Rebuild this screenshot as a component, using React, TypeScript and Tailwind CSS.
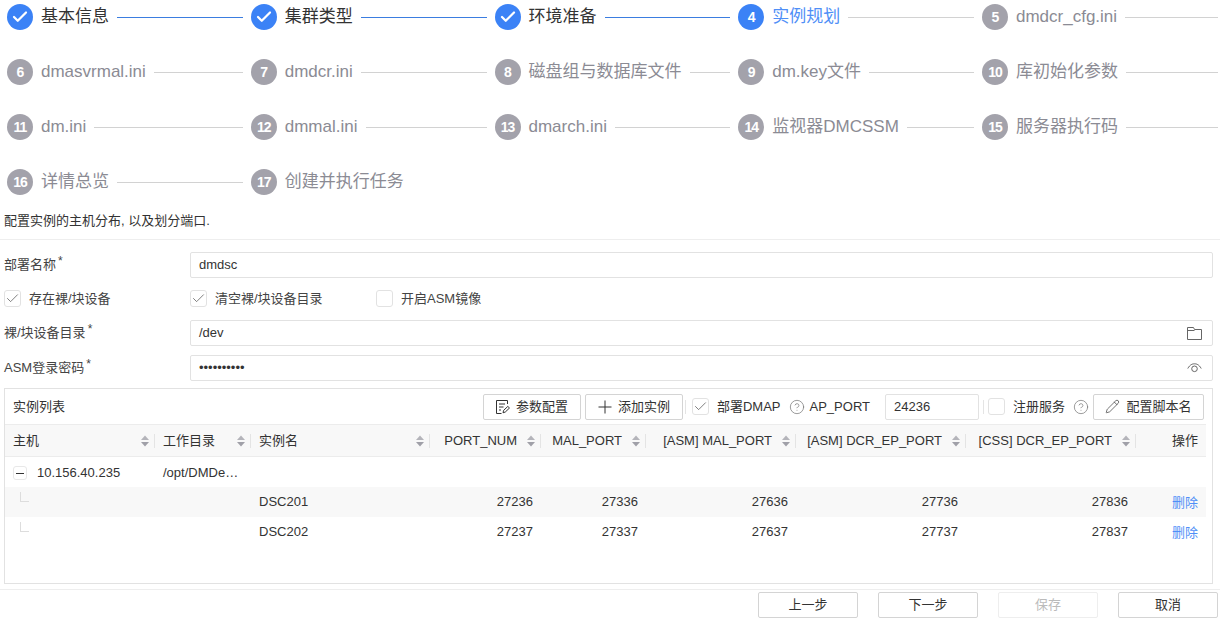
import React from 'react';
import { Check, Pencil, CircleHelp } from 'lucide-react';

type StepState = 'done' | 'active' | 'todo';

const STEPS: { label: string; state: StepState }[] = [
  { label: '基本信息', state: 'done' },
  { label: '集群类型', state: 'done' },
  { label: '环境准备', state: 'done' },
  { label: '实例规划', state: 'active' },
  { label: 'dmdcr_cfg.ini', state: 'todo' },
  { label: 'dmasvrmal.ini', state: 'todo' },
  { label: 'dmdcr.ini', state: 'todo' },
  { label: '磁盘组与数据库文件', state: 'todo' },
  { label: 'dm.key文件', state: 'todo' },
  { label: '库初始化参数', state: 'todo' },
  { label: 'dm.ini', state: 'todo' },
  { label: 'dmmal.ini', state: 'todo' },
  { label: 'dmarch.ini', state: 'todo' },
  { label: '监视器DMCSSM', state: 'todo' },
  { label: '服务器执行码', state: 'todo' },
  { label: '详情总览', state: 'todo' },
  { label: '创建并执行任务', state: 'todo' },
];

const ROWS = [
  { name: 'DSC201', port: 27236, mal: 27336, asmMal: 27636, asmDcr: 27736, cssDcr: 27836, striped: true },
  { name: 'DSC202', port: 27237, mal: 27337, asmMal: 27637, asmDcr: 27737, cssDcr: 27837, striped: false },
];

function Step({ index, label, state }: { index: number; label: string; state: StepState }) {
  const isLast = index === STEPS.length;
  return (
    <div className="flex h-[26px] items-center pr-2">
      <div
        className={`flex h-[26px] w-[26px] shrink-0 items-center justify-center rounded-full text-[14px] font-bold tracking-[-1px] text-white ${
          state === 'todo' ? 'bg-[#a3a2ab]' : 'bg-[#3b82f6]'
        }`}
      >
        {state === 'done' ? <Check size={18} strokeWidth={3} /> : index}
      </div>
      <span
        className={`ml-2 whitespace-nowrap text-[17px] ${
          state === 'done' ? 'text-[#333333]' : state === 'active' ? 'text-[#4f8ff7]' : 'text-[#8b8b94]'
        }`}
      >
        {label}
      </span>
      {!isLast && (
        <div className={`ml-2 h-px flex-1 ${state === 'done' ? 'bg-[#3b7de0]' : 'bg-[#d2d2d2]'}`} />
      )}
    </div>
  );
}

function Box({ checked }: { checked?: boolean }) {
  return (
    <span className="flex h-[17px] w-[17px] shrink-0 items-center justify-center rounded-[3px] border border-[#e2e2e2] bg-white text-[#555555]">
      {checked && <Check size={15} strokeWidth={1.2} />}
    </span>
  );
}

function Label({ text }: { text: string }) {
  return (
    <div className="w-[186px] shrink-0 whitespace-nowrap text-[13px] text-[#444444]">
      {text}
      <span className="relative -top-1 ml-0.5 text-[12px]">*</span>
    </div>
  );
}

function ToolButton({ icon, text, className }: { icon: React.ReactNode; text: string; className: string }) {
  return (
    <button className={`flex h-[26px] items-center justify-center gap-1.5 rounded-[2px] border border-[#d4d4d4] bg-white text-[13px] text-[#333333] ${className}`}>
      {icon}
      {text}
    </button>
  );
}

function Sort() {
  return (
    <svg width="10" height="14" viewBox="0 0 10 14" className="shrink-0">
      <path d="M5 1.5 9 6H1z" fill="#b4b4ba" />
      <path d="M5 12.5 1 8h8z" fill="#a0a0a8" />
    </svg>
  );
}

function FolderIcon() {
  return (
    <svg width="15" height="13" viewBox="0 0 15 13" fill="none" stroke="#666666" strokeWidth="1">
      <path d="M.5.5h6l1 2h7v10H.5z" />
      <path d="M.5 3.5h7" />
    </svg>
  );
}

function EyeIcon() {
  return (
    <svg width="15" height="10" viewBox="0 0 15 10" fill="none" stroke="#666666" strokeWidth="1">
      <path d="M.8 5.5C3 1.5 5.5.8 7.5.8s4.5.7 6.7 4.7" />
      <circle cx="7.5" cy="5.8" r="2.8" />
    </svg>
  );
}

function ConfigIcon() {
  return (
    <svg width="14" height="14" viewBox="0 0 14 14" fill="none" stroke="#333333" strokeWidth="1">
      <path d="M11.5 4V.5H.5v13h5" />
      <path d="M3 4h6M3 7h4.5M3 10h2" />
      <path d="M7 12.8l.6-2.4 4.2-4 1.7 1.6-4.2 4z" />
    </svg>
  );
}

function PlusIcon() {
  return (
    <svg width="14" height="14" viewBox="0 0 14 14" fill="none" stroke="#333333" strokeWidth="1">
      <path d="M7 .5v13M.5 7h13" />
    </svg>
  );
}

function HeadCell({ text, right, className }: { text: string; right?: boolean; className: string }) {
  return (
    <div className={`flex h-full items-center ${className}`}>
      <div className="flex h-full flex-1 items-center pl-2 pr-1">
        <span className={`flex-1 whitespace-nowrap ${right ? 'pr-[9px] text-right' : ''}`}>{text}</span>
        <Sort />
      </div>
      <div className="h-[14px] w-px bg-[#e4e4e4]" />
    </div>
  );
}

function FootButton({ text, disabled }: { text: string; disabled?: boolean }) {
  return (
    <button
      className={`h-[26px] w-[100px] rounded-[2px] border text-[13px] ${
        disabled ? 'border-[#eeeeee] text-[#bbbbbb]' : 'border-[#d4d4d4] text-[#333333]'
      }`}
    >
      {text}
    </button>
  );
}

export default function App() {
  return (
    <div className="flex h-[622px] w-[1220px] flex-col overflow-hidden bg-white font-['Liberation_Sans','Noto_Sans_CJK_SC',sans-serif] text-[13px] text-[#333333]">
      <div className="grid w-[1227px] shrink-0 grid-cols-[repeat(5,243.75px)] gap-y-[29px] pl-[7px] pt-1">
        {STEPS.map((step, i) => (
          <Step key={step.label} index={i + 1} label={step.label} state={step.state} />
        ))}
      </div>

      <p className="mt-[18px] pl-1 text-[13px] leading-4 text-[#333333]">配置实例的主机分布, 以及划分端口.</p>
      <div className="mt-[10px] h-px shrink-0 bg-[#eeeeee]" />

      {/* form */}
      <div className="mt-3 pl-1 pr-[7px]">
        <div className="flex h-[26px] items-center">
          <Label text="部署名称" />
          <div className="flex h-full flex-1 items-center rounded-[2px] border border-[#e2e2e2] px-2">dmdsc</div>
        </div>
        <div className="mt-3 flex h-[17px] items-center text-[#444444]">
          <div className="flex w-[186px] items-center gap-2">
            <Box checked />
            存在裸/块设备
          </div>
          <div className="flex w-[186px] items-center gap-2">
            <Box checked />
            清空裸/块设备目录
          </div>
          <div className="flex items-center gap-2">
            <Box />
            开启ASM镜像
          </div>
        </div>
        <div className="mt-[13px] flex h-[26px] items-center">
          <Label text="裸/块设备目录" />
          <div className="flex h-full flex-1 items-center justify-between rounded-[2px] border border-[#e2e2e2] pl-2 pr-[10px]">
            /dev
            <FolderIcon />
          </div>
        </div>
        <div className="mt-[9px] flex h-[26px] items-center">
          <Label text="ASM登录密码" />
          <div className="flex h-full flex-1 items-center justify-between rounded-[2px] border border-[#e2e2e2] pl-2 pr-[10px]">
            <span>••••••••••</span>
            <EyeIcon />
          </div>
        </div>
      </div>

      {/* instance table */}
      <div className="ml-1 mr-[7px] mt-[7px] h-[196px] shrink-0 border border-[#e2e2e2]">
        <div className="flex h-[35px] items-center px-2">
          <span className="flex-1">实例列表</span>
          <ToolButton icon={<ConfigIcon />} text="参数配置" className="w-[98px]" />
          <ToolButton icon={<PlusIcon />} text="添加实例" className="ml-1 w-[98px]" />
          <div className="ml-[2px] mr-[6px] h-[14px] w-px bg-[#e4e4e4]" />
          <Box checked />
          <span className="ml-2 whitespace-nowrap">部署DMAP</span>
          <CircleHelp size={16} strokeWidth={1.1} className="ml-2 text-[#777777]" />
          <span className="ml-[5px] whitespace-nowrap">AP_PORT</span>
          <div className="ml-[15px] flex h-[26px] w-[94px] items-center rounded-[2px] border border-[#e2e2e2] px-2">24236</div>
          <div className="mx-1 h-[14px] w-px bg-[#e4e4e4]" />
          <Box />
          <span className="ml-2 whitespace-nowrap">注册服务</span>
          <CircleHelp size={16} strokeWidth={1.1} className="ml-2 text-[#777777]" />
          <ToolButton icon={<Pencil size={15} strokeWidth={1.1} />} text="配置脚本名" className="ml-1 w-[111px] gap-1" />
        </div>

        <div className="mr-[6px] flex h-[33px] items-center border-y border-[#ececec] bg-[#f8f8f8]">
          <HeadCell text="主机" className="w-[150px]" />
          <HeadCell text="工作目录" className="w-[96px]" />
          <HeadCell text="实例名" className="w-[179px]" />
          <HeadCell text="PORT_NUM" right className="w-[111px]" />
          <HeadCell text="MAL_PORT" right className="w-[105px]" />
          <HeadCell text="[ASM] MAL_PORT" right className="w-[150px]" />
          <HeadCell text="[ASM] DCR_EP_PORT" right className="w-[170px]" />
          <HeadCell text="[CSS] DCR_EP_PORT" right className="w-[170px]" />
          <div className="w-[70px] pr-2 text-right">操作</div>
        </div>

        <div className="mr-[6px] flex h-[30px] items-center pt-[2px]">
          <div className="flex w-[150px] items-center pl-2">
            <span className="flex h-[14px] w-[14px] items-center justify-center rounded-[3px] border border-[#e8e8e8]">
              <span className="h-px w-2 bg-[#333333]" />
            </span>
            <span className="ml-[10px]">10.156.40.235</span>
          </div>
          <div className="w-[96px] truncate px-2">/opt/DMDe…</div>
        </div>

        {ROWS.map((row) => (
          <div key={row.name} className={`mr-[6px] flex h-[30px] items-center ${row.striped ? 'bg-[#f8f8f8]' : ''}`}>
            <div className="h-full w-[246px] pl-[15px] pt-[5px]">
              <div className="h-[10px] w-[9px] border-b border-l border-[#dddddd]" />
            </div>
            <div className="w-[179px] pl-2">{row.name}</div>
            <div className="w-[111px] pr-2 text-right">{row.port}</div>
            <div className="w-[105px] pr-2 text-right">{row.mal}</div>
            <div className="w-[150px] pr-2 text-right">{row.asmMal}</div>
            <div className="w-[170px] pr-2 text-right">{row.asmDcr}</div>
            <div className="w-[170px] pr-2 text-right">{row.cssDcr}</div>
            <div className="w-[70px] pr-2 pt-[2px] text-right text-[#4f8ff7]">删除</div>
          </div>
        ))}
      </div>

      {/* footer */}
      <div className="mt-[5px] h-px shrink-0 bg-[#eeeeee]" />
      <div className="mt-[2px] flex justify-end gap-5 pr-[2px]">
        <FootButton text="上一步" />
        <FootButton text="下一步" />
        <FootButton text="保存" disabled />
        <FootButton text="取消" />
      </div>
    </div>
  );
}
